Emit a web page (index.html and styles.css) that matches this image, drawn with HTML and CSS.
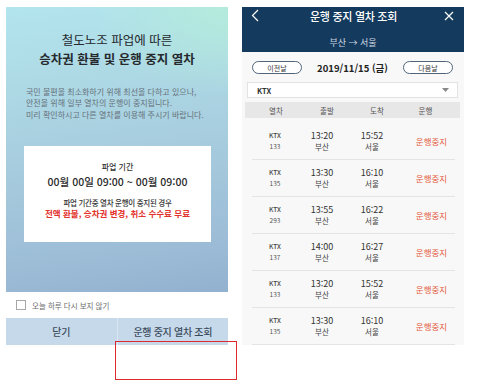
FILE: index.html
```html
<!DOCTYPE html>
<html lang="ko">
<head>
<meta charset="utf-8">
<link rel="stylesheet" href="styles.css">
</head>
<body>
<div class="stage">
  <section class="notice">
    <div class="notice-main">
      <h1 class="title">
        <span class="title-light">철도노조 파업에 따른</span>
        <span class="title-bold">승차권 환불 및 운행 중지 열차</span>
      </h1>
      <p class="desc">국민 불편을 최소화하기 위해 최선을 다하고 있으나,<br>안전을 위해 일부 열차의 운행이 중지됩니다.<br>미리 확인하시고 다른 열차를 이용해 주시기 바랍니다.</p>
      <div class="period-box">
        <div class="period-label">파업 기간</div>
        <div class="period-date">00월 00일 09:00 ~ 00월 09:00</div>
        <div class="period-note">파업 기간중 열차 운행이 중지된 경우</div>
        <div class="period-red">전액 환불, 승차권 변경, 취소 수수료 무료</div>
      </div>
    </div>
    <label class="check-row"><span class="checkbox"></span><span class="check-text">오늘 하루 다시 보지 않기</span></label>
    <div class="btn-bar">
      <div class="btn">닫기</div>
      <div class="btn">운행 중지 열차 조회</div>
    </div>
  </section>

  <section class="app">
    <header class="app-head">
      <div class="head-row">
        <svg class="ico-back" width="8" height="13" viewBox="0 0 8 13"><path d="M7 1 L1.5 6.5 L7 12" fill="none" stroke="#fff" stroke-width="1.2"/></svg>
        <div class="head-title">운행 중지 열차 조회</div>
        <svg class="ico-close" width="10" height="10" viewBox="0 0 10 10"><path d="M1 1 L9 9 M9 1 L1 9" fill="none" stroke="#fff" stroke-width="1.2"/></svg>
      </div>
      <div class="route">부산 → 서울</div>
    </header>
    <div class="date-row">
      <div class="pill">이전날</div>
      <div class="date">2019/11/15 (금)</div>
      <div class="pill">다음날</div>
    </div>
    <div class="select">
      <span>KTX</span>
      <svg width="7" height="4" viewBox="0 0 7 4"><path d="M0 0 H7 L3.5 4 Z" fill="#888"/></svg>
    </div>
    <div class="thead">
      <span>열차</span><span>출발</span><span>도착</span><span>운행</span>
    </div>
    <div class="rows">
      <div class="row"><div class="c1"><span>KTX</span><span>133</span></div><div class="c2"><span class="t">13:20</span><span class="s">부산</span></div><div class="c3"><span class="t">15:52</span><span class="s">서울</span></div><div class="c4">운행중지</div></div>
      <div class="row"><div class="c1"><span>KTX</span><span>135</span></div><div class="c2"><span class="t">13:30</span><span class="s">부산</span></div><div class="c3"><span class="t">16:10</span><span class="s">서울</span></div><div class="c4">운행중지</div></div>
      <div class="row"><div class="c1"><span>KTX</span><span>293</span></div><div class="c2"><span class="t">13:55</span><span class="s">부산</span></div><div class="c3"><span class="t">16:22</span><span class="s">서울</span></div><div class="c4">운행중지</div></div>
      <div class="row"><div class="c1"><span>KTX</span><span>137</span></div><div class="c2"><span class="t">14:00</span><span class="s">부산</span></div><div class="c3"><span class="t">16:27</span><span class="s">서울</span></div><div class="c4">운행중지</div></div>
      <div class="row"><div class="c1"><span>KTX</span><span>133</span></div><div class="c2"><span class="t">13:20</span><span class="s">부산</span></div><div class="c3"><span class="t">15:52</span><span class="s">서울</span></div><div class="c4">운행중지</div></div>
      <div class="row"><div class="c1"><span>KTX</span><span>135</span></div><div class="c2"><span class="t">13:30</span><span class="s">부산</span></div><div class="c3"><span class="t">16:10</span><span class="s">서울</span></div><div class="c4">운행중지</div></div>
    </div>
  </section>

  <div class="highlight"></div>
</div>
</body>
</html>
```

FILE: styles.css
```css
* { box-sizing: border-box; margin: 0; padding: 0; }
html, body { background: #fff; }
body {
  width: 500px;
  height: 384px;
  overflow: hidden;
  font-family: "Noto Sans CJK KR", "Noto Sans", sans-serif;
  color: #333;
}
.stage {
  position: relative;
  display: flex;
  gap: 14px;
  padding: 7px 0 0 6px;
  height: 384px;
}

/* Left notice panel */
.notice {
  width: 222px;
  height: 338px;
  display: flex;
  flex-direction: column;
}
.notice-main {
  height: 285px;
  background:
    radial-gradient(ellipse 140px 90px at 100% 0%, rgba(180, 236, 218, 0.9), rgba(180, 236, 218, 0) 100%),
    linear-gradient(172deg, #b3e5ef 0%, #aedbe6 22%, #a6cadd 55%, #9dbdd7 82%, #92b1cf 100%);
  padding-top: 24px;
  display: flex;
  flex-direction: column;
}
.title {
  display: flex;
  flex-direction: column;
  align-items: center;
  gap: 1.5px;
  font-size: 12.5px;
  line-height: 17px;
  color: #262a2e;
}
.title-light { font-weight: 400; }
.title-bold { font-weight: 700; }
.desc {
  margin-top: 19px;
  padding-left: 20px;
  font-size: 8px;
  line-height: 11.5px;
  color: #66717a;
  white-space: nowrap;
}
.period-box {
  margin: 26px 17px 0 18px;
  height: 96px;
  background: #fff;
  padding-top: 15px;
  display: flex;
  flex-direction: column;
  align-items: center;
}
.period-label {
  font-size: 8px;
  line-height: 12px;
  font-weight: 500;
  color: #333;
}
.period-date {
  margin-top: 1px;
  font-size: 10.5px;
  line-height: 15px;
  font-weight: 500;
  color: #2a2a2a;
}
.period-note {
  margin-top: 9px;
  font-size: 7.5px;
  letter-spacing: -0.3px;
  line-height: 10px;
  font-weight: 500;
  color: #333;
}
.period-red {
  font-size: 8.5px;
  line-height: 10px;
  font-weight: 700;
  color: #e2332d;
}
.check-row {
  height: 26px;
  background: #fff;
  display: flex;
  align-items: center;
  padding-left: 10px;
  gap: 6px;
}
.checkbox {
  width: 10px;
  height: 10px;
  border: 1px solid #a8a8a8;
  background: #fff;
}
.check-text {
  font-size: 7.5px;
  color: #6b6b6b;
}
.btn-bar {
  height: 27px;
  display: flex;
  background: #c6d9ea;
}
.btn {
  flex: 1;
  display: flex;
  align-items: center;
  justify-content: center;
  font-size: 10px;
  letter-spacing: -0.3px;
  font-weight: 500;
  color: #3b4b5c;
}
.btn + .btn { border-left: 1px solid #dbe7f2; }

/* Right app panel */
.app {
  width: 222px;
  height: 338px;
  background: #f8f8f8;
  display: flex;
  flex-direction: column;
  overflow: hidden;
}
.app-head {
  height: 49px;
  background: #143a5d;
  color: #fff;
}
.head-row {
  height: 17px;
  display: flex;
  align-items: center;
  justify-content: space-between;
  padding: 0 10px 0 9px;
}
.head-title {
  font-size: 11px;
  letter-spacing: -0.3px;
  font-weight: 500;
  padding-left: 4px;
}
.route {
  margin-top: 13px;
  text-align: center;
  font-size: 9px;
  line-height: 12px;
  color: #cdd6e0;
}
.date-row {
  margin-top: 9px;
  height: 13px;
  display: flex;
  align-items: center;
  justify-content: space-between;
  padding: 0 11px 0 10px;
}
.pill {
  width: 50px;
  height: 13px;
  border: 1px solid #51657a;
  border-radius: 7px;
  display: flex;
  align-items: center;
  justify-content: center;
  font-size: 7px;
  color: #333;
  background: #fff;
}
.date {
  font-size: 9.5px;
  font-weight: 700;
  color: #222;
}
.select {
  margin: 8px 6px 0 5px;
  height: 17px;
  background: #fff;
  border: 1px solid #e2e2e2;
  display: flex;
  align-items: center;
  justify-content: space-between;
  padding: 0 8px 0 9px;
  font-size: 7.5px;
  font-weight: 700;
  color: #333;
}
.thead {
  margin: 4px 4px 0 3px;
  height: 17px;
  background: #e7e7e7;
  display: grid;
  grid-template-columns: 58px 48px 52px 1fr;
  align-items: center;
  font-size: 7.5px;
  color: #555;
}
.thead span { text-align: center; }
.thead span:first-child { padding-left: 4px; }
.thead span:last-child { padding-right: 12px; }
.rows {
  margin: 5px 9px 0 10px;
}
.row {
  height: 37px;
  border-bottom: 1px solid #e4e4e4;
  display: grid;
  grid-template-columns: 46px 48px 52px 1fr;
  align-items: center;
}
.row > div {
  display: flex;
  flex-direction: column;
  align-items: center;
}
.c1 { font-size: 6.5px; line-height: 11px; color: #555; }
.c1 span:first-child { font-weight: 500; color: #444; }
.t { font-size: 9px; line-height: 11px; color: #333; }
.s { font-size: 7.5px; line-height: 11px; color: #444; }
.c4 {
  font-size: 8.5px;
  color: #e4583c;
  padding-left: 10px;
}

/* annotation */
.highlight {
  position: absolute;
  left: 115px;
  top: 341px;
  width: 122px;
  height: 39px;
  border: 1.5px solid #dc2a2e;
}
```
